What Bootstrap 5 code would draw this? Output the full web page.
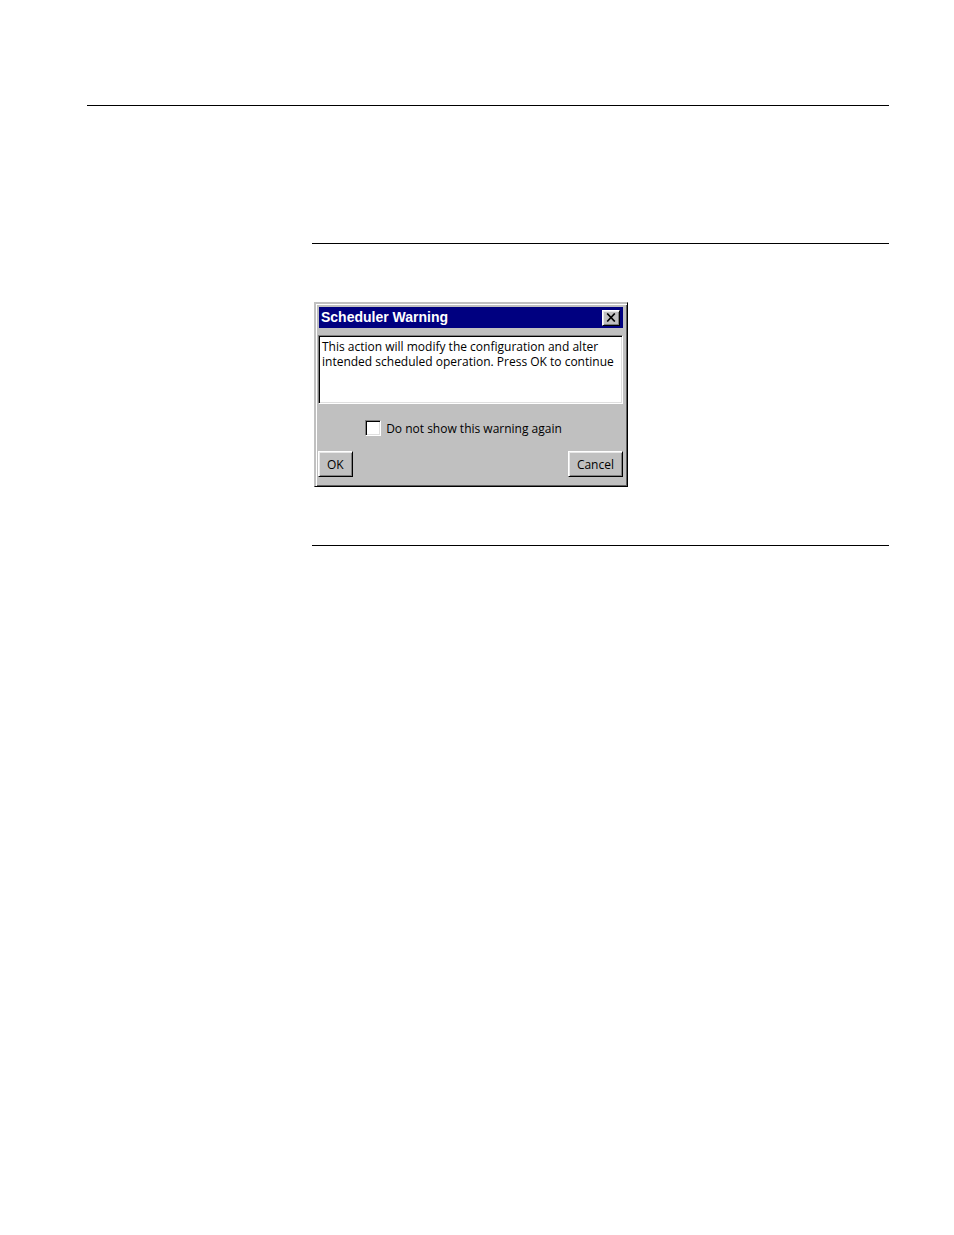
<!DOCTYPE html>
<html lang="en">
<head>
<meta charset="utf-8">
<meta name="viewport" content="width=device-width, initial-scale=1">
<title>Scheduler Warning</title>
<link href="https://cdn.jsdelivr.net/npm/bootstrap@5.3.0/dist/css/bootstrap.min.css" rel="stylesheet">
<style>
  body { background: #fff; color: #000; font-family: "Open Sans", "Liberation Sans", sans-serif; font-size: 12px; line-height: 15px; }
  .sheet { padding: 105px 65px 40px 87px; }
  .rule { border-top: 1px solid #000; }
  .figure-block { margin: 137px 0 0 225px; padding: 58px 2px; border-bottom: 1px solid #000; }
  .dialog-window {
    width: 314px; max-width: 100%; padding: 4px 4px 9px 3px; background: #c0c0c0;
    border: 1px solid; border-color: #c0c0c0 #000 #000 #c0c0c0;
    box-shadow: inset 1px 1px #c0c0c0, inset 2px 2px #fff, inset -1px -1px #606060;
  }
  .title-strip { height: 21px; margin-left: 1px; padding: 0 3px 0 2px; background: #000080; color: #fff; }
  .title-strip h1 { font-family: "Liberation Sans", sans-serif; font-size: 14px; line-height: 15px; font-weight: 700; }
  .bevel {
    background: #c0c0c0; color: #000; font: inherit; border: 1px solid; border-radius: 0;
    border-color: #fff #000 #000 #fff; box-shadow: inset 1px 1px #e8e8e8, inset -1px -1px #808080;
  }
  .close-box { width: 18px; height: 16px; }
  .message-box {
    height: 69px; margin-top: 7px; padding: 3px; background: #fff;
    border: 1px solid; border-color: #808080 #fff #fff #808080;
    box-shadow: inset 1px 1px #000, inset -1px -1px #dfdfdf;
  }
  .check-row { margin: 16px 0 15px; padding-right: 14px; gap: 5px; }
  .check-square {
    appearance: none; width: 16px; height: 16px; margin: 0; background: #fff;
    border: 1px solid; border-color: #808080 #fff #fff #808080;
    box-shadow: inset 1px 1px #000, inset -1px -1px #dfdfdf;
  }
  .check-square:checked { background: #000; }
  .action { height: 26px; padding: 0 8px; }
</style>
</head>
<body>
<main class="sheet">
  <div class="rule"></div>
  <section class="figure-block rule">
    <div class="dialog-window" role="dialog" aria-labelledby="dialog-title" aria-describedby="dialog-message">
      <header class="title-strip d-flex align-items-center justify-content-between">
        <h1 id="dialog-title" class="mb-0">Scheduler Warning</h1>
        <button type="button" class="bevel close-box d-flex align-items-center justify-content-center p-0" aria-label="Close">
          <svg width="10" height="9" viewBox="0 0 10 9" aria-hidden="true"><path d="M1.2.5 8.8 8.5M8.8.5 1.2 8.5" fill="none" stroke="#000" stroke-width="1.7"/></svg>
        </button>
      </header>
      <div class="message-box"><p id="dialog-message" class="mb-0">This action will modify the configuration and alter intended scheduled operation. Press OK to continue</p></div>
      <div class="check-row d-flex align-items-center justify-content-center">
        <input type="checkbox" class="check-square" id="hide-warning">
        <label for="hide-warning">Do not show this warning again</label>
      </div>
      <div class="d-flex justify-content-between">
        <button type="button" class="bevel action">OK</button>
        <button type="button" class="bevel action">Cancel</button>
      </div>
    </div>
  </section>
</main>
<script src="https://cdn.jsdelivr.net/npm/bootstrap@5.3.0/dist/js/bootstrap.bundle.min.js"></script>
</body>
</html>
